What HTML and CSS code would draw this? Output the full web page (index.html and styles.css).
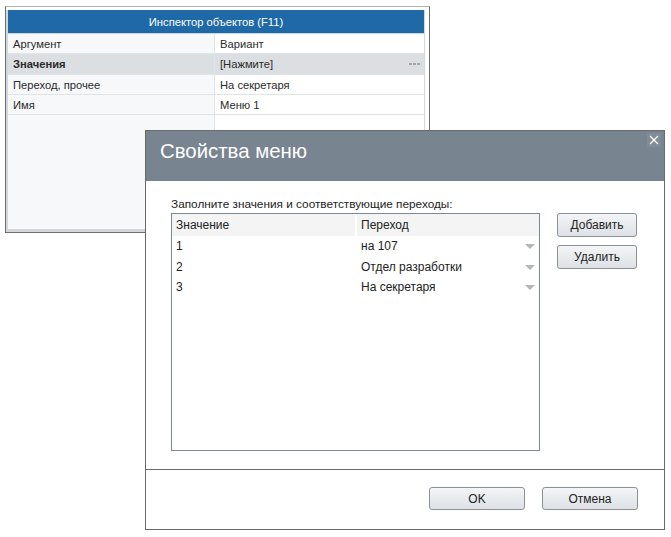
FILE: index.html
```html
<!DOCTYPE html>
<html lang="ru">
<head>
<meta charset="utf-8">
<link rel="stylesheet" href="styles.css">
</head>
<body>
<div class="desk">
  <div class="inspector">
    <div class="insp-inner">
      <div class="insp-head">Инспектор объектов (F11)</div>
      <div class="insp-grid">
        <div class="prow"><div class="pk">Аргумент</div><div class="pv">Вариант</div></div>
        <div class="prow sel"><div class="pk bold">Значения</div><div class="pv">[Нажмите]<span class="dots"></span></div></div>
        <div class="prow"><div class="pk">Переход, прочее</div><div class="pv">На секретаря</div></div>
        <div class="prow"><div class="pk">Имя</div><div class="pv">Меню 1</div></div>
        <div class="prow fill"><div class="pk"></div><div class="pv"></div></div>
      </div>
    </div>
  </div>

  <div class="dialog">
    <div class="dlg-head">
      <span class="dlg-title">Свойства меню</span>
      <span class="close"><svg width="10" height="10" viewBox="0 0 10 10"><path d="M1 1L9 9M9 1L1 9" stroke="#fff" stroke-width="1.3"/></svg></span>
    </div>
    <div class="dlg-body">
      <div class="dlg-main">
        <div class="lbl">Заполните значения и соответствующие переходы:</div>
        <div class="grid">
          <div class="ghead"><div class="gc1">Значение</div><div class="gc2">Переход</div></div>
          <div class="grow"><div class="gc1">1</div><div class="gc2">на 107<span class="arrow"></span></div></div>
          <div class="grow"><div class="gc1">2</div><div class="gc2">Отдел разработки<span class="arrow"></span></div></div>
          <div class="grow"><div class="gc1">3</div><div class="gc2">На секретаря<span class="arrow"></span></div></div>
        </div>
      </div>
      <div class="side">
        <button class="btn side-btn">Добавить</button>
        <button class="btn side-btn">Удалить</button>
      </div>
    </div>
    <div class="dlg-foot">
      <button class="btn foot-btn">OK</button>
      <button class="btn foot-btn">Отмена</button>
    </div>
  </div>
</div>
</body>
</html>
```
FILE: styles.css
```css
* { box-sizing: border-box; }
html, body { margin: 0; padding: 0; background: #fff; }
body { font-family: "Liberation Sans", Arial, sans-serif; font-size: 12px; color: #222; }
.desk { position: relative; width: 671px; height: 537px; overflow: hidden; }

.inspector {
  position: absolute; left: 5px; top: 6px; width: 425px; height: 227px;
  border: 1px solid #6e6e6e; border-top-color: #b5b5b5;
  background: #fff;
  padding: 3px 4px 0 0;
  font-size: 11.2px;
}
.insp-inner {
  height: 100%;
  border-left: 2px solid #d4d7da; border-bottom: 3px solid #d4d7da; border-right: 1px solid #d4d7da;
  display: flex; flex-direction: column; background: #f7f8fa;
}
.insp-head {
  height: 24px; background: #1f6aa6; color: #fff; text-align: center;
  padding-top: 1px; line-height: 22px; border-bottom: 1px solid #c8d6e3;
}
.insp-grid { flex: 1; display: flex; flex-direction: column; }
.prow { display: flex; height: 20px; border-bottom: 1px solid #e1e3e6; }
.prow .pk { width: 207px; padding: 2px 0 0 5px; line-height: 17px; background: #f7f8fa; color: #2a2a2a; border-right: 1px solid #e1e3e6; }
.prow .pv { flex: 1; padding: 2px 0 0 5px; line-height: 17px; background: #fff; color: #2a2a2a; position: relative; }
.prow.sel { height: 21px; }
.prow.sel .pk, .prow.sel .pv { background: #dcdfe2; }
.bold { font-weight: bold; }
.dots {
  position: absolute; right: 4px; top: 9px; width: 11px; height: 2px;
  background: repeating-linear-gradient(90deg, #a4a6a8 0 3px, transparent 3px 4px);
}
.prow.fill { flex: 1; border-bottom: none; }

.dialog {
  position: absolute; left: 145px; top: 130px; width: 520px; height: 400px;
  border: 1px solid #6a6a6a; background: #fff;
  display: flex; flex-direction: column;
}
.dlg-head {
  height: 50px; background: #788490; position: relative;
  padding: 8px 0 0 14px;
}
.dlg-title { color: #fff; font-size: 20.4px; line-height: 24px; display: block; }
.close {
  position: absolute; right: 3px; top: 2px; width: 14px; height: 14px;
  display: flex; align-items: center; justify-content: center;
  background: #808c97;
}
.dlg-body { height: 288px; display: flex; padding: 16px 27px 0 25px; gap: 17px; }
.dlg-main { width: 371px; display: flex; flex-direction: column; }
.lbl { font-size: 11.8px; line-height: 14px; height: 16px; color: #222; }
.grid {
  height: 238px; border: 1px solid #7b8994; background: #fff;
}
.ghead { display: flex; height: 22px; background: #f4f4f4; }
.ghead .gc1 { border-right: 2px solid #fff; }
.gc1 { width: 185px; padding-left: 4px; line-height: 22px; }
.gc2 { flex: 1; padding-left: 4px; line-height: 22px; position: relative; }
.grow { display: flex; height: 20.5px; }
.grow .gc1, .grow .gc2 { line-height: 20px; }
.arrow {
  position: absolute; right: 4px; top: 8px; width: 0; height: 0;
  border-left: 5px solid transparent; border-right: 5px solid transparent;
  border-top: 5px solid #b4b6b8;
}
.side { display: flex; flex-direction: column; gap: 8px; padding-top: 16px; }
.btn {
  font-family: "Liberation Sans", Arial, sans-serif; font-size: 12px; color: #222;
  border: 1px solid #8b9297; border-radius: 3px;
  background: linear-gradient(#f3f5f7, #dde1e5);
  padding: 0;
}
.side-btn { width: 80px; height: 24px; }
.dlg-foot {
  flex: 1; border-top: 1px solid #6e6e6e;
  display: flex; justify-content: flex-end; align-items: flex-start;
  padding: 17px 26px 0 0; gap: 17px;
}
.foot-btn { width: 96px; height: 23px; }
```
